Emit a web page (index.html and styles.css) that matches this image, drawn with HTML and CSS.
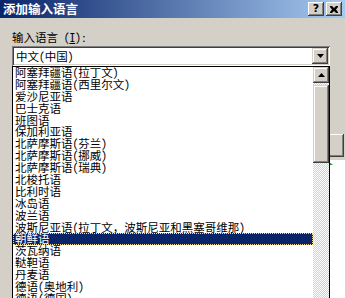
FILE: index.html
```html
<!DOCTYPE html>
<html lang="zh-CN">
<head>
<meta charset="utf-8">
<title>添加输入语言</title>
<link rel="stylesheet" href="styles.css">
</head>
<body>
<div class="screen">
  <div class="parent-window">
    <div class="parent-left"></div>
    <div class="parent-tree"><span class="tree-mark"></span></div>
  </div>
  <div class="dialog">
    <div class="titlebar">
      <span class="title">添加输入语言</span>
      <div class="tb-buttons">
        <span class="tb-btn help">?</span>
        <span class="tb-btn close"><svg width="8" height="7" viewBox="0 0 8 7"><path d="M0 0h2l2 2 2-2h2v1L6 3.5 8 6v1H6L4 5 2 7H0V6l2-2.5L0 1z" fill="#000"/></svg></span>
      </div>
    </div>
    <div class="body">
      <div class="field-label">输入语言 (<u>I</u>):</div>
      <div class="combo">
        <span class="combo-text">中文(中国)</span>
        <span class="combo-btn"><svg width="7" height="4" viewBox="0 0 7 4"><path d="M0 0h7L3.5 4z" fill="#000"/></svg></span>
      </div>
      <div class="buttons">
        <span class="btn">确定</span>
        <span class="btn">取消</span>
      </div>
    </div>
  </div>
  <div class="dropdown">
    <ul class="items">
      <li>阿塞拜疆语(拉丁文)</li>
      <li>阿塞拜疆语(西里尔文)</li>
      <li>爱沙尼亚语</li>
      <li>巴士克语</li>
      <li>班图语</li>
      <li>保加利亚语</li>
      <li>北萨摩斯语(芬兰)</li>
      <li>北萨摩斯语(挪威)</li>
      <li>北萨摩斯语(瑞典)</li>
      <li>北梭托语</li>
      <li>比利时语</li>
      <li>冰岛语</li>
      <li>波兰语</li>
      <li>波斯尼亚语(拉丁文<span class="fw">，</span>波斯尼亚和黑塞哥维那)</li>
      <li class="selected">朝鲜语</li>
      <li>茨瓦纳语</li>
      <li>鞑靼语</li>
      <li>丹麦语</li>
      <li>德语(奥地利)</li>
      <li>德语(德国)</li>
    </ul>
    <div class="scrollbar">
      <span class="sb-btn"><svg width="7" height="4" viewBox="0 0 7 4"><path d="M3.5 0L7 4H0z" fill="#000"/></svg></span>
      <span class="sb-gap"></span>
      <span class="sb-thumb"></span>
      <span class="sb-track"></span>
    </div>
  </div>
</div>
</body>
</html>
```

FILE: styles.css
```css
* { box-sizing: border-box; }
html, body { margin: 0; padding: 0; background: #fff; }
body {
  font-family: "Noto Sans CJK SC", "Liberation Sans", sans-serif;
  font-feature-settings: "hwid" 1;
  font-size: 11.5px;
  color: #000;
}
.screen {
  position: relative;
  width: 345px;
  height: 298px;
  overflow: hidden;
  background: #d4d0c8;
}
.parent-window {
  position: absolute;
  inset: 0;
  display: flex;
  padding-top: 158px;
}
.parent-left {
  width: 12px;
  border-top: 1px solid #808080;
  background: #d4d0c8;
}
.parent-tree {
  flex: 1;
  position: relative;
  background: #fff;
}
.tree-mark {
  position: absolute;
  right: 12px;
  top: 4px;
  width: 4px;
  height: 3px;
  background: #1f8f1f;
  clip-path: polygon(0 0, 100% 100%, 0 100%);
}
.dialog {
  position: relative;
  width: 345px;
  height: 160px;
  background: #d4d0c8;
  display: flex;
  flex-direction: column;
}
.titlebar {
  height: 18px;
  background: linear-gradient(to right, #0a246a, #a6caf0);
  display: flex;
  align-items: center;
  justify-content: space-between;
  padding: 0 3px 0 3px;
}
.title {
  color: #fff;
  font-weight: bold;
  font-size: 12.5px;
  line-height: 18px;
}
.tb-buttons { display: flex; gap: 2px; }
.tb-btn {
  width: 16px;
  height: 14px;
  background: #d4d0c8;
  box-shadow: inset -1px -1px #404040, inset 1px 1px #fff, inset -2px -2px #808080, inset 2px 2px #d4d0c8;
  display: flex;
  align-items: center;
  justify-content: center;
  font-family: "DejaVu Sans", sans-serif;
  font-weight: bold;
  font-size: 11px;
  line-height: 14px;
}
.body {
  flex: 1;
  display: flex;
  flex-direction: column;
  padding: 13px 15px 0 12px;
}
.field-label {
  line-height: 12px;
  height: 15px;
}
.combo {
  height: 20px;
  background: #fff;
  box-shadow: inset 1px 1px #808080, inset -1px -1px #fff, inset 2px 2px #404040, inset -2px -2px #d4d0c8;
  display: flex;
  align-items: center;
  justify-content: space-between;
  padding: 2px 2px 2px 4px;
}
.combo-text { line-height: 14px; }
.combo-btn {
  width: 16px;
  height: 16px;
  background: #d4d0c8;
  box-shadow: inset -1px -1px #404040, inset 1px 1px #d4d0c8, inset -2px -2px #808080, inset 2px 2px #fff;
  display: flex;
  align-items: center;
  justify-content: center;
}
.buttons {
  margin-top: auto;
  margin-bottom: 3px;
  display: flex;
  justify-content: flex-end;
  gap: 6px;
  margin-right: -14px;
}
.btn {
  width: 75px;
  height: 23px;
  background: #d4d0c8;
  box-shadow: inset -1px -1px #404040, inset 1px 1px #fff, inset -2px -2px #808080, inset 2px 2px #d4d0c8;
  display: flex;
  align-items: center;
  justify-content: center;
}
.dropdown {
  position: absolute;
  left: 12px;
  top: 66px;
  width: 318px;
  height: 250px;
  background: #fff;
  border: 1px solid #000;
  display: flex;
}
.items {
  list-style: none;
  margin: 0;
  padding: 0;
  flex: 1;
  min-width: 0;
}
.items li {
  height: 11.9px;
  line-height: 11.9px;
  padding-left: 2px;
  white-space: nowrap;
}
.fw { font-feature-settings: normal; }
.items li.selected {
  background: #0a246a;
  color: #fff;
  outline: 1px dotted #f5db95;
  outline-offset: -1px;
}
.scrollbar {
  width: 16px;
  display: flex;
  flex-direction: column;
}
.sb-btn {
  height: 16px;
  background: #d4d0c8;
  box-shadow: inset -1px -1px #404040, inset 1px 1px #d4d0c8, inset -2px -2px #808080, inset 2px 2px #fff;
  display: flex;
  align-items: center;
  justify-content: center;
}
.sb-gap, .sb-track {
  background-color: #fff;
  background-image: conic-gradient(#d4d0c8 25%, #fff 0 50%, #d4d0c8 0 75%, #fff 0);
  background-size: 2px 2px;
}
.sb-gap { height: 2px; }
.sb-track { flex: 1; }
.sb-thumb {
  height: 78px;
  background: #d4d0c8;
  box-shadow: inset -1px -1px #404040, inset 1px 1px #d4d0c8, inset -2px -2px #808080, inset 2px 2px #fff;
}
```
